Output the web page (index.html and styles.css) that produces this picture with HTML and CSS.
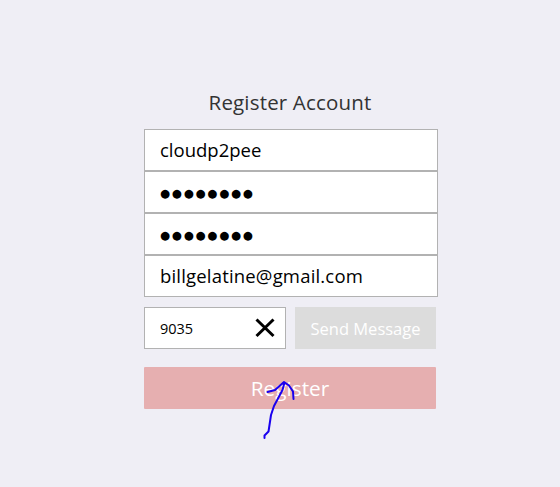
FILE: index.html
```html
<!DOCTYPE html>
<html lang="en">
<head>
<meta charset="utf-8">
<title>Register Account</title>
<link rel="stylesheet" href="styles.css">
</head>
<body>
<main class="form">
  <h1 class="title"><span>Register Account</span></h1>
  <div class="field"><span class="user">cloudp2pee</span></div>
  <div class="field"><span class="dots">●●●●●●●●</span></div>
  <div class="field"><span class="dots">●●●●●●●●</span></div>
  <div class="field"><span class="email">billgelatine@gmail.com</span></div>
  <div class="verify">
    <div class="code"><span class="digits">9035</span>
      <svg class="clear" width="20" height="20" viewBox="0 0 20 20"><path d="M1.500 1.500 18.500 18M18.500 1.500 1.500 18" fill="none" stroke="#000" stroke-width="3"/></svg>
    </div>
    <div class="send"><span>Send Message</span></div>
  </div>
  <div class="register"><span>Register</span>
    <svg class="arrow" width="40" height="64" viewBox="0 0 40 64"><path d="M4.500 62 L4.500 59.500 L8.500 55.500 L9.500 49 L11 39 L14 30 L22.500 14 L24.500 6.500 M7.500 16 L15 14 L24 6 L29 9.500 L33 15.500 L33.500 23" fill="none" stroke="#1a00ef" stroke-width="2" stroke-linecap="round" stroke-linejoin="round"/></svg>
  </div>
</main>
</body>
</html>
```

FILE: styles.css
```css
* { box-sizing: border-box; }
body {
  margin: 0;
  min-height: 487px;
  background: #efeef5;
  font-family: "Open Sans", "Noto Sans", sans-serif;
  color: #000;
}
.form { width: 294px; margin-left: 144px; padding-top: 87px; }
.title {
  margin: 0;
  height: 42px;
  width: 292px;
  text-align: center;
  font-size: 20.5px;
  letter-spacing: 0.17px;
  font-weight: 400;
  line-height: 31px;
  color: #333;
}
.field {
  display: flex;
  align-items: center;
  height: 42px;
  padding-left: 15px;
  background: #fff;
  border: 1px solid #b2b2b2;
  font-size: 18.5px;
  white-space: nowrap;
}
.user, .email { position: relative; top: -1px; }
.email { letter-spacing: 0.18px; }
.dots {
  position: relative;
  top: 1px;
  font-family: "DejaVu Sans", sans-serif;
  font-size: 11.5px;
  letter-spacing: 1.8px;
}
.verify { display: flex; gap: 9px; margin-top: 10px; height: 42px; }
.code {
  display: flex;
  align-items: center;
  justify-content: space-between;
  width: 142px;
  padding: 0 10px 0 15px;
  background: #fff;
  border: 1px solid #b2b2b2;
  font-size: 14.5px;
}
.send {
  width: 141px;
  background: #dcdcdc;
  color: #fff;
  font-size: 16.5px;
  line-height: 43px;
  text-align: center;
}
.register {
  position: relative;
  width: 292px;
  height: 42px;
  margin-top: 18px;
  border-radius: 1px;
  background: #e6afb0;
  color: #fff;
  font-size: 20.8px;
  line-height: 43px;
  text-align: center;
}
.arrow { position: absolute; left: 116px; top: 9px; }
```
